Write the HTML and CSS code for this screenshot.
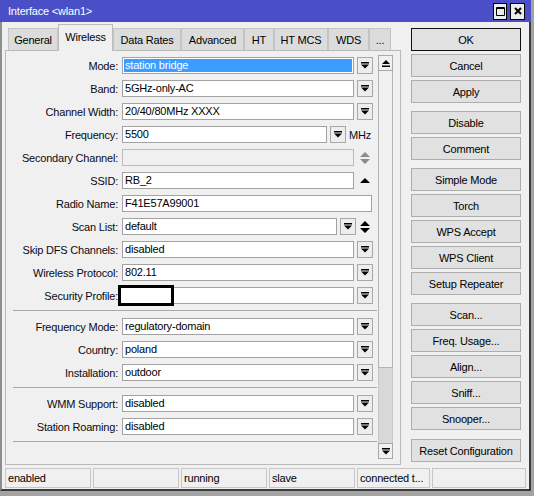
FILE: index.html
```html
<!DOCTYPE html>
<html>
<head>
<meta charset="utf-8">
<link rel="stylesheet" href="styles.css">
</head>
<body>
<div class="window">
  <div class="titlebar">
    <span class="title">Interface &lt;wlan1&gt;</span>
    <div class="tb-btns">
      <span class="tb-btn"><svg width="9" height="9" viewBox="0 0 9 9"><path d="M0.5 0.5h8v8h-8z M0.5 1.5h8" fill="none" stroke="#000" stroke-width="1"/></svg></span>
      <span class="tb-btn"><svg width="8" height="8" viewBox="0 0 8 8"><path d="M1 1L7 7M7 1L1 7" stroke="#000" stroke-width="2"/></svg></span>
    </div>
  </div>
  <div class="body">
    <div class="main">
      <div class="left">
        <div class="tabs">
          <div class="tab w-general">General</div>
          <div class="tab active w-wireless">Wireless</div>
          <div class="tab w-datarates">Data Rates</div>
          <div class="tab w-advanced">Advanced</div>
          <div class="tab w-ht">HT</div>
          <div class="tab w-htmcs">HT MCS</div>
          <div class="tab w-wds">WDS</div>
          <div class="tab w-more">...</div>
        </div>
        <div class="panel">
          <div class="form">
            <div class="row"><label class="lbl">Mode:</label><div class="field f-std selected">station bridge</div><span class="dd"><svg width="8" height="7" viewBox="0 0 8 7"><rect width="8" height="1.5"/><path d="M0 2.5h8L4 6.5z"/></svg></span></div>
            <div class="row"><label class="lbl">Band:</label><div class="field f-std">5GHz-only-AC</div><span class="dd"><svg width="8" height="7" viewBox="0 0 8 7"><rect width="8" height="1.5"/><path d="M0 2.5h8L4 6.5z"/></svg></span></div>
            <div class="row"><label class="lbl">Channel Width:</label><div class="field f-std">20/40/80MHz XXXX</div><span class="dd"><svg width="8" height="7" viewBox="0 0 8 7"><rect width="8" height="1.5"/><path d="M0 2.5h8L4 6.5z"/></svg></span></div>
            <div class="row"><label class="lbl">Frequency:</label><div class="field f-freq">5500</div><span class="dd"><svg width="8" height="7" viewBox="0 0 8 7"><rect width="8" height="1.5"/><path d="M0 2.5h8L4 6.5z"/></svg></span><span class="unit">MHz</span></div>
            <div class="row"><label class="lbl">Secondary Channel:</label><div class="field f-std disabled"></div><span class="ud"><svg width="10" height="12" viewBox="0 0 10 12"><path d="M0 5h10L5 0z M0 7h10L5 12z" fill="#8a8a8a"/></svg></span></div>
            <div class="row"><label class="lbl">SSID:</label><div class="field f-std">RB_2</div><span class="ud"><svg width="10" height="5" viewBox="0 0 10 5"><path d="M0 5h10L5 0z" fill="#000"/></svg></span></div>
            <div class="row"><label class="lbl">Radio Name:</label><div class="field f-wide">F41E57A99001</div></div>
            <div class="row"><label class="lbl">Scan List:</label><div class="field f-scan">default</div><span class="dd"><svg width="8" height="7" viewBox="0 0 8 7"><rect width="8" height="1.5"/><path d="M0 2.5h8L4 6.5z"/></svg></span><span class="ud ud-scan"><svg width="10" height="12" viewBox="0 0 10 12"><path d="M0 5h10L5 0z M0 7h10L5 12z" fill="#000"/></svg></span></div>
            <div class="row"><label class="lbl">Skip DFS Channels:</label><div class="field f-std">disabled</div><span class="dd"><svg width="8" height="7" viewBox="0 0 8 7"><rect width="8" height="1.5"/><path d="M0 2.5h8L4 6.5z"/></svg></span></div>
            <div class="row"><label class="lbl">Wireless Protocol:</label><div class="field f-std">802.11</div><span class="dd"><svg width="8" height="7" viewBox="0 0 8 7"><rect width="8" height="1.5"/><path d="M0 2.5h8L4 6.5z"/></svg></span></div>
            <div class="row rel"><label class="lbl">Security Profile:</label><div class="field f-std"></div><span class="dd"><svg width="8" height="7" viewBox="0 0 8 7"><rect width="8" height="1.5"/><path d="M0 2.5h8L4 6.5z"/></svg></span><div class="redact"></div></div>
            <div class="sep"></div>
            <div class="row"><label class="lbl">Frequency Mode:</label><div class="field f-std">regulatory-domain</div><span class="dd"><svg width="8" height="7" viewBox="0 0 8 7"><rect width="8" height="1.5"/><path d="M0 2.5h8L4 6.5z"/></svg></span></div>
            <div class="row"><label class="lbl">Country:</label><div class="field f-std">poland</div><span class="dd"><svg width="8" height="7" viewBox="0 0 8 7"><rect width="8" height="1.5"/><path d="M0 2.5h8L4 6.5z"/></svg></span></div>
            <div class="row"><label class="lbl">Installation:</label><div class="field f-std">outdoor</div><span class="dd"><svg width="8" height="7" viewBox="0 0 8 7"><rect width="8" height="1.5"/><path d="M0 2.5h8L4 6.5z"/></svg></span></div>
            <div class="sep"></div>
            <div class="row"><label class="lbl">WMM Support:</label><div class="field f-std">disabled</div><span class="dd"><svg width="8" height="7" viewBox="0 0 8 7"><rect width="8" height="1.5"/><path d="M0 2.5h8L4 6.5z"/></svg></span></div>
            <div class="row"><label class="lbl">Station Roaming:</label><div class="field f-std">disabled</div><span class="dd"><svg width="8" height="7" viewBox="0 0 8 7"><rect width="8" height="1.5"/><path d="M0 2.5h8L4 6.5z"/></svg></span></div>
            <div class="sep"></div>
          </div>
          <div class="scrollbar">
            <div class="sb-btn"><svg width="8" height="7" viewBox="0 0 8 7"><path d="M0 4h8L4 0z"/><rect y="5.5" width="8" height="1.5"/></svg></div>
            <div class="sb-thumb"></div>
            <div class="sb-track"></div>
            <div class="sb-btn"><svg width="8" height="7" viewBox="0 0 8 7"><rect width="8" height="1.5"/><path d="M0 2.5h8L4 6.5z"/></svg></div>
          </div>
        </div>
      </div>
      <div class="buttons">
        <div class="btn default">OK</div>
        <div class="btn">Cancel</div>
        <div class="btn">Apply</div>
        <div class="btn grp">Disable</div>
        <div class="btn">Comment</div>
        <div class="btn grp">Simple Mode</div>
        <div class="btn">Torch</div>
        <div class="btn">WPS Accept</div>
        <div class="btn">WPS Client</div>
        <div class="btn">Setup Repeater</div>
        <div class="btn grp">Scan...</div>
        <div class="btn">Freq. Usage...</div>
        <div class="btn">Align...</div>
        <div class="btn">Sniff...</div>
        <div class="btn">Snooper...</div>
        <div class="btn grp last">Reset Configuration</div>
      </div>
    </div>
    <div class="statusbar">
      <div class="cell c1">enabled</div>
      <div class="cell c2"></div>
      <div class="cell c3">running</div>
      <div class="cell c4">slave</div>
      <div class="cell c5">connected t...</div>
      <div class="cell c6"></div>
    </div>
  </div>
</div>
</body>
</html>
```
FILE: styles.css
```css
html, body {
  margin: 0;
  padding: 0;
  background: #a3a3a3;
  width: 534px;
  height: 496px;
  overflow: hidden;
}
body {
  font-family: "Liberation Sans", Arial, sans-serif;
  font-size: 11px;
  letter-spacing: -0.2px;
  color: #000;
}
.window {
  width: 531px;
  display: flex;
  flex-direction: column;
}
.titlebar {
  height: 22px;
  background: #4a4fc7;
  display: flex;
  align-items: center;
  padding: 0 6px 0 8px;
}
.title {
  color: #fff;
  font-size: 11px;
}
.tb-btns {
  margin-left: auto;
  display: flex;
  gap: 3px;
}
.tb-btn {
  width: 12px;
  height: 15px;
  background: #ececec;
  border: 1px solid #000;
  display: flex;
  align-items: center;
  justify-content: center;
}
.tb-btn:last-child {
  width: 13px;
}
.body {
  background: #f0f0f0;
  border-left: 2px solid #8e8e8e;
  border-right: 2px solid #3c3c3c;
  border-bottom: 2px solid #3c3c3c;
  padding-left: 3px;
  display: flex;
  flex-direction: column;
}
.main {
  display: flex;
}
.left {
  width: 396px;
}
.tabs {
  margin-top: 2px;
  height: 26px;
  display: flex;
  align-items: flex-end;
  padding-left: 3px;
  position: relative;
  z-index: 1;
}
.tab {
  box-sizing: border-box;
  height: 22px;
  background: #dcdcdc;
  border: 1px solid #c4c4c4;
  border-bottom: none;
  display: flex;
  align-items: center;
  justify-content: center;
  padding-top: 1px;
}
.tab.active {
  height: 27px;
  margin-bottom: -1px;
  background: #f0f0f0;
  border-color: #bdbdbd;
  padding-top: 0;
  padding-bottom: 3px;
}
.w-general { width: 50px; }
.w-wireless { width: 55px; }
.w-datarates { width: 68px; }
.w-advanced { width: 63px; }
.w-ht { width: 30px; }
.w-htmcs { width: 54px; }
.w-wds { width: 41px; }
.w-more { width: 22px; }
.panel {
  box-sizing: border-box;
  height: 415px;
  border: 1px solid #b9b9b9;
  display: flex;
}
.form {
  flex: 1;
  padding-top: 6px;
}
.row {
  display: flex;
  align-items: center;
  height: 17px;
  margin-bottom: 6px;
}
.rel {
  position: relative;
}
.lbl {
  width: 112px;
  text-align: right;
  margin-right: 4px;
  white-space: nowrap;
  color: #0a0a14;
}
.field {
  box-sizing: border-box;
  height: 17px;
  background: #fff;
  border: 1px solid #a2a2a2;
  padding: 0 2px;
  line-height: 15px;
  white-space: nowrap;
  overflow: hidden;
  color: #000;
}
.field.selected {
  background: #3c9cff;
  color: #fff;
  border-color: #9aa6b4;
  box-shadow: inset 0 0 0 1px #fff;
}
.field.disabled {
  background: #f0f0f0;
  border-color: #bcbcbc;
}
.f-std { width: 232px; }
.f-freq { width: 205px; }
.f-scan { width: 215px; }
.f-wide { width: 250px; }
.dd {
  box-sizing: border-box;
  width: 16px;
  height: 17px;
  margin-left: 3px;
  border: 1px solid #a8a8a8;
  background: #ededed;
  display: flex;
  align-items: center;
  justify-content: center;
}
.unit {
  margin-left: 3px;
  color: #0a0a14;
}
.ud {
  margin-left: 6px;
  display: flex;
  align-items: center;
}
.ud-scan {
  margin-left: 4px;
}
.redact {
  position: absolute;
  left: 112px;
  top: -2px;
  width: 50px;
  height: 15px;
  border: 3px solid #000;
  background: #fff;
}
.sep {
  height: 1px;
  background: #a8a8a8;
  margin: 1px 0 7px 7px;
  width: 364px;
}
.scrollbar {
  width: 15px;
  margin: 4px 7px 5px 0;
  display: flex;
  flex-direction: column;
}
.sb-btn {
  box-sizing: border-box;
  height: 16px;
  border: 1px solid #a8a8a8;
  background: #f0f0f0;
  display: flex;
  align-items: center;
  justify-content: center;
}
.sb-thumb {
  box-sizing: border-box;
  height: 297px;
  border: 1px solid #b4b4b4;
  border-top: none;
  background: #f0f0f0;
}
.sb-track {
  flex: 1;
  background: #d8d8d8;
  border-left: 1px solid #c8c8c8;
  border-right: 1px solid #c8c8c8;
}
.buttons {
  margin-left: 10px;
  margin-top: 6px;
  width: 110px;
  display: flex;
  flex-direction: column;
}
.btn {
  box-sizing: border-box;
  height: 23px;
  margin-bottom: 3px;
  border: 1px solid #adadad;
  background: #e1e1e1;
  display: flex;
  align-items: center;
  justify-content: center;
  white-space: nowrap;
}
.btn.default {
  border-color: #111;
}
.btn.grp {
  margin-top: 5px;
}
.btn.last {
  margin-top: 6px;
}
.statusbar {
  display: flex;
  gap: 2px;
  margin-top: 3px;
  margin-bottom: 1px;
}
.cell {
  box-sizing: border-box;
  height: 20px;
  border: 1px solid #c6c6c6;
  padding-left: 2px;
  display: flex;
  align-items: center;
  white-space: nowrap;
}
.c1, .c2, .c3, .c4 { width: 86px; }
.c5 { width: 73px; }
.c6 { width: 94px; }
```
